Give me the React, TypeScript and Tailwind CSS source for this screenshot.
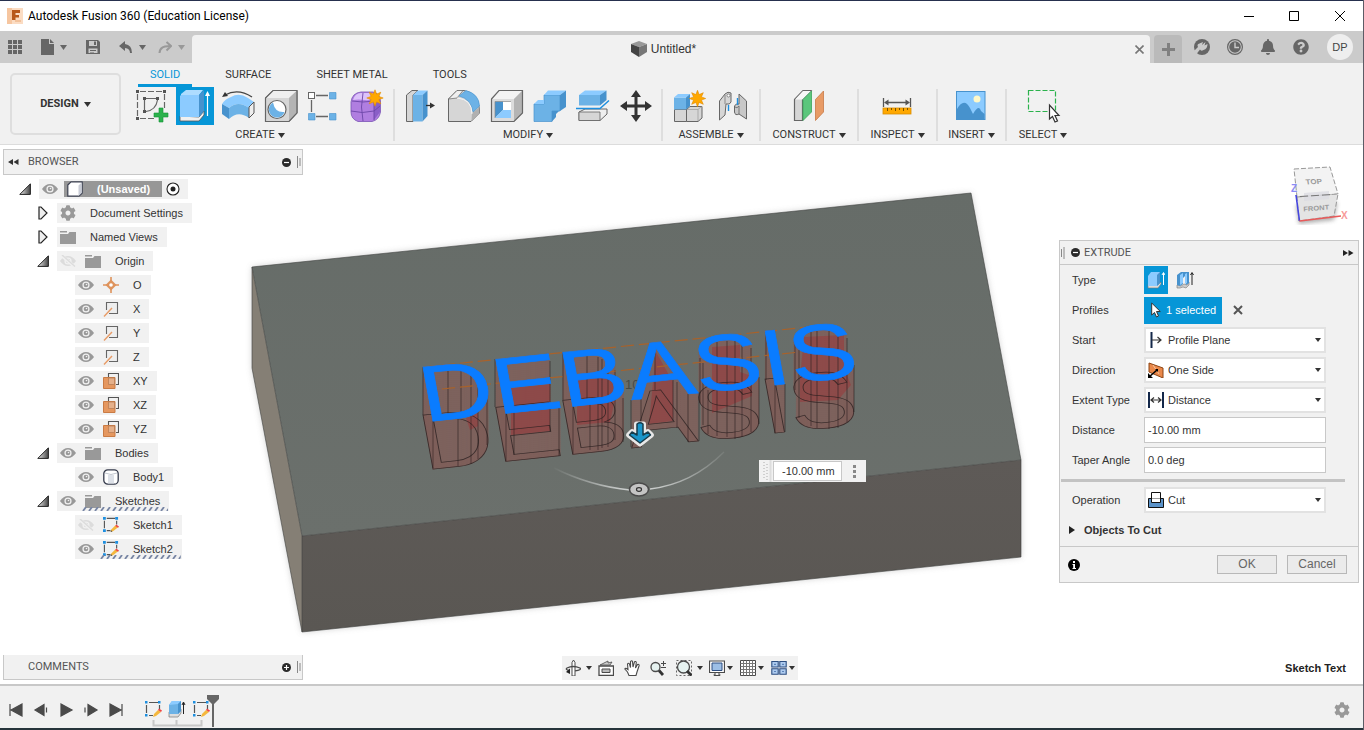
import type { ReactNode } from "react";
import { FaBell, FaCog, FaQuestionCircle } from "react-icons/fa";

const INK = "#4a4a4a";
const GREY = "#d6d6d6";
const LINE = "#666666";
const BLUE = "#6cb2e6";
const BLUE_LIGHT = "#8ccbff";
const BLUE_DARK = "#4792cd";

function Caret({ className = "text-[#333]" }: { className?: string }) {
  return (
    <svg viewBox="0 0 7 5" className={`h-[5px] w-[7px] shrink-0 ${className}`} aria-hidden="true">
      <path d="M0 0H7L3.5 5Z" fill="currentColor" />
    </svg>
  );
}

/* ---------- ribbon icons ---------- */

function Burst({ x, y }: { x: number; y: number }) {
  const points = Array.from({ length: 16 }, (_, i) => {
    const r = i % 2 === 0 ? 8.2 : 4.2;
    const a = (i * Math.PI) / 8;
    return `${(x + r * Math.sin(a)).toFixed(1)},${(y - r * Math.cos(a)).toFixed(1)}`;
  }).join(" ");
  return <polygon points={points} fill="#ffa800" stroke="#e08a00" strokeWidth=".6" />;
}

const sketchIcon = (
  <>
    <g fill="none" stroke={LINE} strokeWidth="1.2">
      <path d="M9 4.5H31M6.5 7V29M9 31.5H23M33.5 7V21" strokeDasharray="6 2" />
      <path d="M13.5 23V13M15 11.5H25M26.5 13Q25 23 15 24.5" />
    </g>
    <g fill="#555">
      <path d="M5 3H8V6H5ZM32 3H35V6H32ZM5 30H8V33H5ZM12 10H15V13H12ZM25 10H28V13H25ZM12 23H15V26H12Z" />
    </g>
    <path d="M28 21H32V26H37V30H32V35H28V30H23V26H28Z" fill="#2bb24c" stroke="#159137" strokeWidth=".6" />
  </>
);

const extrudeIcon = (
  <>
    <path d="M6 29L25 30L30 24V28L25 34L6 34Z" fill="#f0f0f0" stroke="#555" strokeWidth=".8" />
    <path d="M6 9L8 7H25V30H6Z" fill={BLUE_LIGHT} />
    <path d="M7 7L12 3H29L25 8H7Z" fill="#aedcff" />
    <path d="M25 8L30 3V24L25 30Z" fill={BLUE_DARK} />
    <path d="M33.5 29V6" stroke="#fff" strokeWidth="1.2" />
    <path d="M31 9L33.5 4L36 9Z" fill="#fff" />
  </>
);

const revolveIcon = (
  <>
    <path d="M5 17Q8 12 14 10Q22 5 31 11L37 15L32 21Q21 13 12 21Z" fill={BLUE_LIGHT} />
    <path d="M5 17L12 21V32L5 27Z" fill={BLUE_DARK} />
    <path d="M12 21Q21 13 32 21V31Q21 23 12 32Z" fill={BLUE} />
    <path d="M32 20L37 15V26L32 31Z" fill="#eee" stroke="#555" />
    <path d="M8 8Q21 1 35 10" fill="none" stroke="#444" strokeWidth="1.3" />
    <path d="M5 10L8 5L11 9Z" fill="#333" />
  </>
);

const holeIcon = (
  <>
    <path d="M5.500 11L13 3.500H37V26L29 34.500H5.500Z" fill={GREY} stroke={LINE} strokeLinejoin="round" />
    <path d="M6 11L13 4H36.500L29 11Z" fill="#efefef" />
    <path d="M29 11L36.500 4V26L29 34Z" fill="#b4b4b4" />
    <path d="M5.500 11L13 3.500H37V26L29 34.500H5.500Z" fill="none" stroke={LINE} strokeWidth="1.2" />
    <circle cx="17" cy="22.500" r="9" fill="#fff" stroke={LINE} strokeWidth="1.2" />
    <path d="M13 15.500A8 8 0 1 0 24.500 25Q15 26 13 15.500Z" fill={BLUE} />
  </>
);

const patternIcon = (
  <>
    <path d="M13 8.500H25M13 29.500H25M8.500 13V25" stroke={LINE} strokeWidth="1.3" />
    <rect x="5.500" y="5.500" width="6" height="6" fill="#fff" stroke={LINE} />
    <g fill={BLUE} stroke={BLUE_DARK} strokeWidth=".6">
      <path d="M26.500 5.500H33V12H26.500ZM26.500 26.500H33V33H26.500ZM5.500 26.500H12V33H5.500Z" />
    </g>
  </>
);

const formIcon = (
  <>
    <path d="M5 15Q6 6 15 5H27Q34 7 34.500 14V25Q33 33 26 34.500H12Q5 32 5 25Z" fill="#b07ee0" stroke="#7a54b5" strokeWidth=".8" />
    <path d="M7 13Q9 6 15 6H27L29 9Q24 14 19 13Q12 12 7 13Z" fill="#dcc2fa" />
    <path d="M28 14L34 11V25L28 33Z" fill="#8a5fc7" />
    <path d="M5 24Q16 27 28 24L34 19M17 6Q14 20 17 34M28 14V33M6 14Q17 16 28 14" fill="none" stroke="#6c46a8" strokeWidth=".9" />
    <Burst x={29} y={11} />
  </>
);

const pressPullIcon = (
  <>
    <path d="M7.500 8L13 3.500H19L14 8V34.500H7.500Z" fill={GREY} stroke={LINE} />
    <path d="M14 8H23.500V34.500H14Z" fill={BLUE} />
    <path d="M14 8L19 3.500H28.500L23.500 8Z" fill={BLUE_LIGHT} />
    <path d="M23.500 8L28.500 3.500V29L23.500 34.500Z" fill={BLUE_DARK} />
    <path d="M27 18.500H32" stroke="#333" strokeWidth="1.3" />
    <path d="M31 15.500L36 18.500L31 21.500Z" fill="#333" />
  </>
);

const filletIcon = (
  <>
    <path d="M6.500 12L15 3.500H22Q36 6 37.500 22V26L29 34.500H6.500Z" fill={GREY} stroke={LINE} />
    <path d="M6.500 12L15 3.500H21L15 11Z" fill="#efefef" stroke={LINE} strokeWidth=".7" />
    <path d="M30 26L37.500 20V26L29.500 34Z" fill="#b0b0b0" />
    <path d="M17 9L24 3.500Q37 7 37.500 19L31 25Q29 12 17 9Z" fill={BLUE} stroke={BLUE_DARK} strokeWidth=".6" />
    <path d="M15 11Q30 12 30 27" fill="none" stroke="#f6f6f6" strokeWidth="1" />
  </>
);

const shellIcon = (
  <>
    <path d="M6.500 12L14 3.500H37.500V26L29 34.500H6.500Z" fill="#dcdcdc" />
    <path d="M7 12L14 4H37L29 12Z" fill="#f3f3f3" />
    <path d="M29 12L37.500 3.500V26L29 34.500Z" fill="#b4b4b4" />
    <path d="M6.500 12L14 3.500H37.500V26L29 34.500H6.500Z" fill="none" stroke={LINE} strokeWidth="1.2" />
    <path d="M10 14.500H26V31H10Z" fill="#fff" />
    <path d="M10 14.500H18V23L10 31Z" fill={BLUE_DARK} />
    <path d="M10 31L18 23H26V31Z" fill={BLUE_LIGHT} />
    <path d="M10 31V14.500H26" fill="none" stroke="#888" strokeWidth=".7" />
  </>
);

const combineIcon = (
  <>
    <path d="M6 17H16V8H32V24H24V34.500H6Z" fill={BLUE} stroke={BLUE_DARK} strokeWidth=".7" />
    <path d="M6 17L10 13H16V17ZM16 8L20 3.500H38L32 8Z" fill={BLUE_LIGHT} />
    <path d="M32 8L38 3.500V20L32 24ZM24 24H31L28 27V30L24 34.500Z" fill={BLUE_DARK} />
  </>
);

const splitIcon = (
  <>
    <path d="M8 25L14 22H36V27L29 33.500H8Z" fill="#efefef" stroke={LINE} />
    <path d="M8 25H29V33.500H8Z" fill={GREY} stroke={LINE} strokeWidth=".8" />
    <path d="M8 8H29V18.500H8Z" fill={BLUE} />
    <path d="M8 8L14 3.500H35.500L29 8Z" fill={BLUE_LIGHT} />
    <path d="M29 8L35.500 3.500V13L29 18.500Z" fill={BLUE_DARK} />
    <path d="M5 21.500H29L38 13.500" fill="none" stroke="#1d8fe0" strokeWidth="1.500" />
  </>
);

const moveIcon = (
  <g fill="#333">
    <path d="M20.500 9H23.500V17.500H32V20.500H23.500V29H20.500V20.500H12V17.500H20.500Z" />
    <path d="M22 3L27 10H17ZM22 35L27 28H17ZM6 19L13 14V24ZM38 19L31 14V24Z" />
  </g>
);

const componentIcon = (
  <>
    <path d="M6.500 22.500H18.500V34.500H6.500Z" fill={GREY} stroke={LINE} />
    <path d="M18.500 22.500L22 19.500H34V31L30 34.500H18.500Z" fill={GREY} stroke={LINE} />
    <path d="M19 22.500H30V34M30 22.500L33.500 19.500" fill="none" stroke="#999" strokeWidth=".7" />
    <path d="M6 10.500H18V22.500H6Z" fill={BLUE} />
    <path d="M6 10.500L10 7H22L18 10.500Z" fill={BLUE_LIGHT} />
    <path d="M18 10.500L22 7V19L18 22.500Z" fill={BLUE_DARK} />
    <Burst x={29.500} y={11.500} />
  </>
);

const jointIcon = (
  <>
    <path d="M8.500 14L14 7Q17 4 20 6V15Q19 18 15 17L14 28L8.500 33Z" fill={GREY} stroke={LINE} />
    <path d="M14 8V17" stroke="#888" />
    <path d="M35.500 32L28 27Q24 29 23.500 25V19Q25 16 28 17V7L35.500 14Z" fill="#c8c8c8" stroke={LINE} />
    <path d="M17.500 18V24M26.500 11V18" stroke="#1d8fe0" strokeWidth="1.400" />
    <circle cx="17.500" cy="8.500" r="1.500" fill="#fff" stroke={LINE} strokeWidth=".7" />
    <path d="M24 20Q26 22 28 19V27" fill="none" stroke={LINE} strokeWidth=".8" />
  </>
);

const constructIcon = (
  <>
    <path d="M6.500 12.500L15 3.500H23L14.500 12.500V33.500H6.500Z" fill={GREY} stroke={LINE} strokeWidth="1.2" />
    <path d="M7 12.500L15 4H23L14.500 12.500Z" fill="#f7f7f7" />
    <path d="M15 12.500L23.500 4V25L15 33.500Z" fill="#5bc67c" stroke="#3ba45c" strokeWidth=".8" />
    <path d="M27.500 12.500L35.500 4V25L27.500 33.500Z" fill="#e89b66" stroke="#c87a46" strokeWidth=".8" />
  </>
);

const inspectIcon = (
  <>
    <path d="M7.500 11V20M34.500 11V20M10 15.500H32" stroke="#555" strokeWidth="1.300" />
    <path d="M8 15.500L12.500 12.500V18.500ZM34 15.500L29.500 12.500V18.500Z" fill="#555" />
    <rect x="7" y="21" width="28" height="6" fill="#ffa800" stroke="#d98d00" strokeWidth=".8" />
    <path d="M11.500 21V24M15.500 21V23M19.500 21V24M23.500 21V23M27.500 21V24M31.500 21V23" stroke="#7a5200" />
  </>
);

const insertIcon = (
  <>
    <rect x="6.500" y="4.500" width="28.500" height="28" fill={BLUE_LIGHT} stroke={BLUE_DARK} />
    <circle cx="27" cy="12" r="3.500" fill="#fff8c8" />
    <path d="M7 22Q14 10 20 21L23 27Q29 17 31 24L34.500 27V32H7Z" fill={BLUE_DARK} />
  </>
);

const selectIcon = (
  <>
    <rect x="6.500" y="3.500" width="27" height="21" fill="none" stroke="#2bb24c" strokeWidth="1.200" strokeDasharray="5 2" />
    <path d="M27.500 18V32L30.500 29.500L33 35L35.500 34L33 28.500H37Z" fill="#fff" stroke="#333" strokeWidth="1.200" />
  </>
);

type Tool = { name: string; icon: ReactNode; active?: boolean };
type Group = { label: string; width: string; tools: Tool[] };

const groups: Group[] = [
  {
    label: "CREATE",
    width: "",
    tools: [
      { name: "Create Sketch", icon: sketchIcon },
      { name: "Extrude", icon: extrudeIcon, active: true },
      { name: "Revolve", icon: revolveIcon },
      { name: "Hole", icon: holeIcon },
      { name: "Rectangular Pattern", icon: patternIcon },
      { name: "Create Form", icon: formIcon },
    ],
  },
  {
    label: "MODIFY",
    width: "",
    tools: [
      { name: "Press Pull", icon: pressPullIcon },
      { name: "Fillet", icon: filletIcon },
      { name: "Shell", icon: shellIcon },
      { name: "Combine", icon: combineIcon },
      { name: "Split Body", icon: splitIcon },
      { name: "Move", icon: moveIcon },
    ],
  },
  {
    label: "ASSEMBLE",
    width: "w-[88px]",
    tools: [
      { name: "New Component", icon: componentIcon },
      { name: "Joint", icon: jointIcon },
    ],
  },
  { label: "CONSTRUCT", width: "w-[88px]", tools: [{ name: "Offset Plane", icon: constructIcon }] },
  { label: "INSPECT", width: "w-[69px]", tools: [{ name: "Measure", icon: inspectIcon }] },
  { label: "INSERT", width: "w-[59px]", tools: [{ name: "Decal", icon: insertIcon }] },
  { label: "SELECT", width: "w-[64px]", tools: [{ name: "Select", icon: selectIcon }] },
];

function TitleBar() {
  return (
    <header className="flex h-[31px] shrink-0 items-center border-t border-[#26304e] bg-white pl-[7px]">
      <svg viewBox="0 0 16 16" className="size-4" aria-hidden="true">
        <rect width="16" height="16" fill="#fbdcc3" />
        <path d="M0 0H5V16H0Z" fill="#f6c6a0" />
        <path d="M5 2H13V5H8.500V7H12V9.500H8.500V12H5Z" fill="#b8581a" />
        <path d="M8 13H14" stroke="#e9a875" />
      </svg>
      <h1 className="ml-[5px] text-[12px] text-black [font-family:Roboto,sans-serif]">
        Autodesk Fusion 360 (Education License)
      </h1>
      <div className="ml-auto flex text-black">
        <button aria-label="Minimize" className="grid h-[29px] w-[45px] place-items-center">
          <svg viewBox="0 0 10 10" className="size-[10px]"><path d="M0 5.500H10" stroke="currentColor" /></svg>
        </button>
        <button aria-label="Maximize" className="grid h-[29px] w-[46px] place-items-center">
          <svg viewBox="0 0 10 10" className="size-[10px]"><path d="M.5.5H9.500V9.500H.5Z" fill="none" stroke="currentColor" /></svg>
        </button>
        <button aria-label="Close window" className="grid h-[29px] w-[46px] place-items-center">
          <svg viewBox="0 0 10 10" className="size-[10px]"><path d="M0 0L10 10M10 0L0 10" stroke="currentColor" /></svg>
        </button>
      </div>
    </header>
  );
}

function TabBar() {
  return (
    <div className="flex h-8 shrink-0 items-end bg-[#cbcbcb] text-[#666]">
      <div className="flex h-full w-[192px] items-center pl-2">
        <button aria-label="Data panel">
          <svg viewBox="0 0 14 14" className="size-[14px]" fill="currentColor">
            <path d="M0 0H4V4H0ZM5 0H9V4H5ZM10 0H14V4H10ZM0 5H4V9H0ZM5 5H9V9H5ZM10 5H14V9H10ZM0 10H4V14H0ZM5 10H9V14H5ZM10 10H14V14H10Z" />
          </svg>
        </button>
        <button aria-label="File" className="ml-[19px] flex items-center gap-[6px]">
          <svg viewBox="0 0 13 16" className="h-4 w-[13px]" fill="currentColor">
            <path d="M0 0H8V5H13V16H0ZM9 0L13 4H9Z" />
          </svg>
          <Caret className="text-[#666]" />
        </button>
        <button aria-label="Save" className="ml-[19px]">
          <svg viewBox="0 0 14 14" className="size-[14px]">
            <path d="M0 0H12L14 2V14H0Z" fill="currentColor" />
            <path d="M3 1H11V6H3ZM2.500 8.500H11.500V13H2.500Z" fill="#cbcbcb" />
            <path d="M8 1.500H10V5H8ZM4 10H10V11H4ZM4 12H8V12.500H4Z" fill="currentColor" />
          </svg>
        </button>
        <button aria-label="Undo" className="ml-[19px] flex items-center gap-[6px]">
          <svg viewBox="0 0 14 14" className="size-[14px]">
            <path d="M6 1V4Q13 5 13 13H11Q11 8.500 6 8V11L0 6Z" fill="currentColor" />
          </svg>
          <Caret className="text-[#666]" />
        </button>
        <button aria-label="Redo" className="ml-[12px] flex items-center gap-[6px] text-[#999]">
          <svg viewBox="0 0 14 14" className="size-[14px]">
            <path d="M8.500 2L13 6L8.500 10.500M13 6.500Q2 5 1.500 13" fill="none" stroke="currentColor" strokeWidth="2" />
          </svg>
          <Caret className="text-[#999]" />
        </button>
      </div>
      <div className="flex h-7 flex-1 items-center rounded-t-[4px] bg-[#f1f1f1] pr-[5px]">
        <a href="#untitled" className="flex flex-1 items-center justify-center gap-1 pl-[2px] text-[12px] text-[#333]">
          <svg viewBox="0 0 16 16" className="size-4" aria-hidden="true">
            <path d="M0 3L8 0L16 3L8 6Z" fill="#999" />
            <path d="M0 3L8 6V16L0 11Z" fill="#444" />
            <path d="M8 6L16 3V11L8 16Z" fill="#777" />
          </svg>
          Untitled*
        </a>
        <button aria-label="Close tab" className="grid size-3 place-items-center text-[#777]">
          <svg viewBox="0 0 9 9" className="size-[9px]"><path d="M.5.5L8.500 8.500M8.500.5L.5 8.500" stroke="currentColor" strokeWidth="1.600" /></svg>
        </button>
      </div>
      <button aria-label="New design" className="ml-1 grid h-7 w-7 place-items-center rounded-t-[4px] bg-[#bababa] text-[#808080]">
        <svg viewBox="0 0 13 13" className="size-[13px]"><path d="M5 0H8V5H13V8H8V13H5V8H0V5H5Z" fill="currentColor" /></svg>
      </button>
      <div className="flex h-full items-center gap-[17px] pr-[10px] pl-3">
        <button aria-label="Extensions">
          <svg viewBox="0 0 16 16" className="size-4">
            <circle cx="8" cy="8" r="8" fill="currentColor" />
            <path d="M0 12L4 8Q2.500 5 5.500 4.500L9 3L8 6L11.500 3L10.500 6.500L13.500 5Q13.500 10 9.500 11Q7 12.500 6 10.500L2.500 15Z" fill="#cbcbcb" />
          </svg>
        </button>
        <button aria-label="Job status">
          <svg viewBox="0 0 16 16" className="size-4">
            <circle cx="8" cy="8" r="7.400" fill="none" stroke="currentColor" strokeWidth="1.200" />
            <circle cx="8" cy="8" r="5.800" fill="currentColor" />
            <path d="M8 3.500V8.500H12" fill="none" stroke="#cbcbcb" strokeWidth="1.400" />
          </svg>
        </button>
        <button aria-label="Notifications"><FaBell className="size-4" /></button>
        <button aria-label="Help"><FaQuestionCircle className="size-4" /></button>
        <button className="ml-px size-[26px] rounded-full bg-[#eee] text-[11px] text-[#444]">DP</button>
      </div>
    </div>
  );
}

function Ribbon() {
  return (
    <div className="flex shrink-0 gap-[10px] border-b border-[#dcdcdc] bg-[#f1f1f1] pl-[10px] text-[11px] text-[#333] [font-family:Roboto,sans-serif]">
      <button className="mt-[10px] flex h-[62px] w-[111px] shrink-0 items-center justify-center gap-[5px] rounded-[5px] border-2 border-[#dedede] font-bold">
        DESIGN <Caret />
      </button>
      <div>
        <nav className="flex h-6 gap-[21px] pl-[7px]">
          {["SOLID", "SURFACE", "SHEET METAL", "TOOLS"].map((tab, i) => (
            <a
              key={tab}
              href={`#${tab.toLowerCase().replace(" ", "-")}`}
              className={`border-b-[3px] px-3 pt-[3px] leading-[17px] ${i === 0 ? "border-[#0696d7] text-[#0696d7]" : "border-transparent"}`}
            >
              {tab}
            </a>
          ))}
        </nav>
        <div className="flex">
          {groups.map((g, i) => (
            <div key={g.label} className="flex">
              {i > 0 && <div className="mx-1 mt-[2px] mb-[3px] w-[2px] bg-[#dedede]" />}
              <section aria-label={g.label} className={g.width}>
                <div className="flex justify-center">
                  {g.tools.map((t) => (
                    <button
                      key={t.name}
                      aria-label={t.name}
                      className={t.active ? "mr-[3px] ml-[2px] w-[38px] bg-[#0696d7]" : "w-[43px]"}
                    >
                      <svg viewBox={t.active ? "2 0 38 38" : "0 0 43 38"} className="h-[38px] w-full">{t.icon}</svg>
                    </button>
                  ))}
                </div>
                <button className="flex h-[19px] w-full items-center justify-center gap-[3px] pt-px">
                  {g.label} <Caret />
                </button>
              </section>
            </div>
          ))}
        </div>
      </div>
    </div>
  );
}

/* ---------- browser tree ---------- */

function Eye({ off = false }: { off?: boolean }) {
  return (
    <svg viewBox="0 0 16 12" className={`h-3 w-4 shrink-0 ${off ? "text-[#dcdcdc]" : "text-[#999]"}`} aria-hidden="true">
      <path d="M0 6Q3.500 1 8 1T16 6Q12.500 11 8 11T0 6Z" fill="currentColor" />
      <circle cx="8" cy="6" r="3.600" fill="#f1f1f1" />
      <circle cx="8" cy="6" r="2.300" fill="currentColor" />
      <circle cx="8.500" cy="5.500" r=".8" fill="#f1f1f1" />
      {off && <path d="M1 0L15 12" stroke="#f1f1f1" strokeWidth="3" />}
      {off && <path d="M2 0L15 11.500" stroke="currentColor" strokeWidth="1.400" />}
    </svg>
  );
}

const glyphs: Record<string, ReactNode> = {
  gear: <FaCog className="size-4 text-[#999]" />,
  folder: (
    <svg viewBox="0 0 16 14" className="h-[14px] w-4">
      <path d="M0 1H7V2.500H0ZM0 4H8L9.500 2H16V14H0Z" fill="#999" />
    </svg>
  ),
  origin: (
    <svg viewBox="0 0 16 16" className="size-4">
      <path d="M8 2.500L13.500 8L8 13.500L2.500 8Z" fill="#de935c" />
      <path d="M8 0V4M8 12V16M0 8H4M12 8H16" stroke="#de935c" strokeWidth="1.600" />
      <circle cx="8" cy="8" r="1.800" fill="#fff" />
    </svg>
  ),
  axis: (
    <svg viewBox="0 0 16 16" className="size-4">
      <path d="M3.500 9V1.500H14.500V12.500H6" fill="#eee" stroke="#666" strokeWidth="1.100" />
      <path d="M1 15.500L9 7" stroke="#e89b66" strokeWidth="1.400" />
    </svg>
  ),
  plane: (
    <svg viewBox="0 0 16 16" className="size-4">
      <path d="M5.500 4V.5H15.500V11.500H13" fill="none" stroke="#555" strokeWidth="1.100" />
      <path d="M.5 4.500H12V15.500H.5Z" fill="#e5975f" stroke="#c97b44" />
      <path d="M5.500 5H11.500V11.500H5.500Z" fill="#e5b08a" stroke="#b57a50" strokeWidth=".7" />
    </svg>
  ),
  body: (
    <svg viewBox="0 0 16 16" className="size-4">
      <rect x=".8" y=".8" width="14.400" height="14.400" rx="4" fill="#fff" stroke="#33394a" strokeWidth="1.300" />
      <path d="M5 6H11V14.500H5Z" fill="#dde1e8" />
      <path d="M2 4Q8 7 14 4" fill="none" stroke="#c2c7d0" />
    </svg>
  ),
  sketch: (
    <svg viewBox="0 0 17 17" className="size-4">
      <path d="M4 1.500H13M1.500 4V12M4 14.500H8M14.500 4V8" stroke="#555" strokeWidth="1.200" />
      <path d="M0 0H3V3H0ZM13 0H16V3H13ZM0 13H3V16H0Z" fill="#1d8fe0" />
      <path d="M8 16L9 13L13 9L16 11L11 15Z" fill="#f5b83d" />
      <path d="M14 8L17 10L16 11.500L13 9.500Z" fill="#ef4444" />
      <path d="M8 16L9 14L10 15.500Z" fill="#444" />
    </svg>
  ),
  cube: (
    <svg viewBox="0 0 16 16" className="size-4">
      <path d="M.8 4L4 .8H15.200V12L12 15.200H.8Z" fill="#fff" stroke="#3c4152" strokeWidth="1.200" strokeLinejoin="round" />
      <path d="M11.500 4.500L14.700 1.500V12L11.500 15Z" fill="#c9ccd6" />
    </svg>
  ),
};

type Node = {
  label: string;
  level: 1 | 2;
  glyph: string;
  arrow?: "open" | "closed";
  eye?: "on" | "off";
  hatched?: boolean;
};

const nodes: Node[] = [
  { label: "Document Settings", level: 1, glyph: "gear", arrow: "closed" },
  { label: "Named Views", level: 1, glyph: "folder", arrow: "closed" },
  { label: "Origin", level: 1, glyph: "folder", arrow: "open", eye: "off" },
  { label: "O", level: 2, glyph: "origin", eye: "on" },
  { label: "X", level: 2, glyph: "axis", eye: "on" },
  { label: "Y", level: 2, glyph: "axis", eye: "on" },
  { label: "Z", level: 2, glyph: "axis", eye: "on" },
  { label: "XY", level: 2, glyph: "plane", eye: "on" },
  { label: "XZ", level: 2, glyph: "plane", eye: "on" },
  { label: "YZ", level: 2, glyph: "plane", eye: "on" },
  { label: "Bodies", level: 1, glyph: "folder", arrow: "open", eye: "on" },
  { label: "Body1", level: 2, glyph: "body", eye: "on" },
  { label: "Sketches", level: 1, glyph: "folder", arrow: "open", eye: "on", hatched: true },
  { label: "Sketch1", level: 2, glyph: "sketch", eye: "off" },
  { label: "Sketch2", level: 2, glyph: "sketch", eye: "on", hatched: true },
];

function Arrow({ kind }: { kind?: "open" | "closed" }) {
  return (
    <span className="grid w-[27px] shrink-0 place-items-center pr-px">
      {kind === "open" && (
        <svg viewBox="0 0 12 12" className="size-3" aria-hidden="true">
          <defs>
            <linearGradient id="fold" x1="0" x2="1"><stop offset="0" stopColor="#eee" /><stop offset="1" stopColor="#444" /></linearGradient>
          </defs>
          <path d="M.8 11.400H11.400V.8Z" fill="url(#fold)" stroke="#222" strokeWidth="1" />
        </svg>
      )}
      {kind === "closed" && (
        <svg viewBox="0 0 10 14" className="h-[14px] w-[10px]" aria-hidden="true">
          <path d="M1 1H3L9 7L3 13H1Z" fill="#eee" stroke="#222" strokeWidth="1.200" />
        </svg>
      )}
    </span>
  );
}

function PanelHeader({ title, collapsed = false }: { title: string; collapsed?: boolean }) {
  return (
    <div
      className={`flex w-[300px] items-center border-[#c8c8c8] bg-[#f1f1f1] pl-1 text-[11px] text-[#555] [font-family:Roboto,sans-serif] ${collapsed ? "h-[25px] border-x border-b" : "h-[26px] border"}`}
    >
      <span className="w-5">
        {!collapsed && (
          <svg viewBox="0 0 11 6" className="h-[6px] w-[11px]" aria-hidden="true"><path d="M0 3L5 0V6ZM5.500 3L10.500 0V6Z" fill="#333" /></svg>
        )}
      </span>
      <h2>{title}</h2>
      <button aria-label={collapsed ? "Expand" : "Collapse"} className="ml-auto">
        <svg viewBox="0 0 9 9" className="size-[9px]">
          <circle cx="4.500" cy="4.500" r="4.500" fill="#2b2b2b" />
          <path d={collapsed ? "M2 4.500H7M4.500 2V7" : "M2 4.500H7"} stroke="#fff" strokeWidth="1.200" />
        </svg>
      </button>
      <svg viewBox="0 0 4 12" className="mr-px ml-[6px] h-3 w-1" aria-hidden="true"><path d="M.5 0V12M3 2V10" stroke="#888" /></svg>
    </div>
  );
}

function Hatch() {
  return (
    <span className="absolute right-px bottom-0 left-[25px] h-1">
      <svg className="block h-full w-full" aria-hidden="true">
        <defs>
          <pattern id="hatch" width="6" height="4" patternUnits="userSpaceOnUse"><path d="M1 4L4 0" stroke="#7684a3" strokeWidth="1.800" /></pattern>
        </defs>
        <rect width="100%" height="4" fill="url(#hatch)" />
      </svg>
    </span>
  );
}

function Browser() {
  return (
    <div className="pt-1 text-[11px] text-[#333]">
      <div className="pl-[3px]"><PanelHeader title="BROWSER" /></div>
      <ul className="flex flex-col gap-1 pt-1">
        <li className="flex h-5 pl-3">
          <Arrow kind="open" />
          <div className="flex items-center bg-[#f1f1f1] pr-2 pl-[3px]">
            <Eye />
            <span className="ml-[6px] flex h-4 items-center gap-[14px] bg-[#979797] pr-3 pl-[3px] font-bold text-white">
              {glyphs.cube}(Unsaved)
            </span>
            <svg viewBox="0 0 14 14" className="ml-1 size-[14px]" aria-hidden="true">
              <circle cx="7" cy="7" r="6" fill="#fff" stroke="#222" strokeWidth="1.100" />
              <circle cx="7" cy="7" r="2.500" fill="#222" />
            </svg>
          </div>
        </li>
        {nodes.map((n) => (
          <li key={n.label} className={`flex h-5 ${n.level === 1 ? "pl-[30px]" : "pl-12"}`}>
            <Arrow kind={n.arrow} />
            <div className="relative flex items-center bg-[#f1f1f1] pr-[9px] pl-[3px]">
              {n.eye && <span className="mr-[9px]"><Eye off={n.eye === "off"} /></span>}
              <span className="mr-[14px] w-4">{glyphs[n.glyph]}</span>
              {n.label}
              {n.hatched && <Hatch />}
            </div>
          </li>
        ))}
      </ul>
    </div>
  );
}

/* ---------- model view ---------- */

const walls: [number, number, number][] = [
  [423, 367, 415], [433, 421, 468], [448, 371, 416], [458, 419, 466], [461, 370, 414], [471, 372, 464], [478, 377, 459], [487, 395, 445],
  [495, 359, 407], [506, 413, 461], [514, 410, 455], [550, 361, 432], [559, 408, 456],
  [563, 352, 400], [573, 406, 454], [587, 356, 400], [590, 403, 450], [598, 357, 450], [602, 359, 448], [608, 362, 447], [615, 370, 440], [623, 398, 442],
  [631, 400, 447], [641, 398, 446], [655, 350, 390], [673, 380, 421], [677, 382, 428], [688, 394, 442], [699, 392, 441],
  [700, 358, 403], [703, 363, 425], [708, 390, 434], [717, 342, 436], [727, 341, 437], [735, 341, 439], [742, 344, 437], [751, 348, 432], [759, 377, 424],
  [766, 331, 380], [775, 385, 433], [785, 384, 432],
  [795, 340, 390], [799, 350, 418], [811, 331, 426], [817, 331, 428], [829, 331, 429], [838, 332, 428], [847, 338, 422], [854, 365, 412],
];

function Model() {
  return (
    <svg
      viewBox="0 145 1363 539"
      preserveAspectRatio="xMidYMid meet"
      className="absolute inset-0 h-full w-full [font-family:'Liberation_Sans',Arial,sans-serif]"
      role="img"
      aria-label="Block with extruded lettering"
    >
      <defs>
        <linearGradient id="top" x1="0" y1="0" x2="0" y2="1"><stop offset="0" stopColor="#666c68" /><stop offset="1" stopColor="#6b706c" /></linearGradient>
        <linearGradient id="front" x1="0" y1="0" x2="0" y2="1"><stop offset="0" stopColor="#5e5a57" /><stop offset="1" stopColor="#5a5753" /></linearGradient>
        <linearGradient id="sweep" gradientUnits="userSpaceOnUse" x1="552" y1="0" x2="726" y2="0">
          <stop offset="0" stopColor="#d4d7d6" stopOpacity="0" />
          <stop offset=".4" stopColor="#d4d7d6" stopOpacity=".9" />
          <stop offset=".6" stopColor="#d4d7d6" stopOpacity=".9" />
          <stop offset="1" stopColor="#d4d7d6" stopOpacity="0.1" />
        </linearGradient>
        <filter id="soft" x="-5%" y="-5%" width="110%" height="110%"><feGaussianBlur stdDeviation="3" /></filter>
      </defs>
      <path d="M252 267L971 193L1021 460V557L302 632L252 368Z" fill="#8a8a8a" opacity=".4" filter="url(#soft)" />
      <path d="M252 267L302 536V632L252 368Z" fill="#857f75" />
      <path d="M252 267L971 193L1021 460L302 536Z" fill="url(#top)" />
      <path d="M302 536L1021 460V557L302 632Z" fill="url(#front)" />
      <path d="M302 632V536L252 267L971 193L1021 460V557L302 632L252 368V267M302 536L1021 460" fill="none" stroke="#40413f" strokeWidth=".6" />

      <text x="625" y="389" fontSize="13" fill="#464b48">10</text>

      <g fill="#7d625d" stroke="#7d625d" strokeWidth=".6">
        {Array.from({ length: 25 }, (_, i) => (
          <use key={i} href="#lettering" y={48 - i * 2} />
        ))}
      </g>
      <g fill="#a52a2f" opacity=".42">
        <path d="M511 388L550 384V431L511 435Z" />
        <path d="M577 380L612 376L616 395L610 422L577 425Z" />
        <path d="M656 352L673 382V421L649 424L652 392Z" />
        <path d="M712 347L740 345V372L752 376V396L712 413Z" />
        <path d="M804 337L844 335V368L851 385L838 400L800 402V378Z" />
        <path d="M466 418L478 413V426L470 430Z" />
      </g>
      <path d={walls.map(([x, a, b]) => `M${x} ${a}V${b}`).join("")} stroke="#2a2020" strokeWidth=".8" opacity=".75" fill="none" />
      <g fill="#8b3f3f" fillOpacity=".08" stroke="#2a2020" strokeWidth=".9" strokeOpacity=".8">
        <use href="#lettering" y="48" />
      </g>
      <g stroke="#a8622b" strokeWidth="1.200" strokeDasharray="13 5" fill="none">
        <path d="M424 367L828 325V333M442 389L800 352" />
      </g>
      <g fill="#0a7cff" stroke="#0a7cff" strokeWidth=".8">
        <text id="lettering" fontSize="100" transform="matrix(1.006 -.106 .145 .785 424.750 421.900)">DEBASIS</text>
      </g>

      <path d="M554 468Q590 486 630 490M650 489Q692 484 724 452" fill="none" stroke="url(#sweep)" strokeWidth="1.400" />
      <ellipse cx="639" cy="489.500" rx="9.500" ry="6.500" fill="#c4c4c4" stroke="#4a4a4a" strokeWidth="1.500" />
      <ellipse cx="639" cy="489.500" rx="2.500" ry="1.800" fill="none" stroke="#333" strokeWidth="1.200" />
      <path
        d="M636.500 424H643.500V434L648 431.500L651.500 435L640 444L628.500 435L632 431.500L636.500 434Z"
        fill="#1b8fbf"
        stroke="#e8e8e8"
        strokeWidth="5"
        strokeLinejoin="round"
      />
      <path
        d="M637 424Q640 421.500 643 424V435L648 432L650.500 435L640 443L629.500 435L632 432L637 435Z"
        fill="#1b95c9"
        stroke="#183c4b"
        strokeWidth="1.500"
        strokeLinejoin="round"
      />
    </svg>
  );
}

function ViewCube() {
  return (
    <svg viewBox="1288 163 64 62" className="mr-[11px] h-[62px] w-16 [font-family:'Liberation_Sans',Arial,sans-serif]" aria-label="View cube" role="img">
      <defs>
        <filter id="cubeShadow"><feGaussianBlur stdDeviation="2" /></filter>
      </defs>
      <path d="M1296 205L1337 202L1334 220L1299 224Z" fill="#777" opacity=".6" filter="url(#cubeShadow)" />
      <path d="M1294 169L1330 167L1338 194L1297 197Z" fill="#f3f3f3" stroke="#999" strokeDasharray="5 2" />
      <path d="M1297 197L1338 194L1334 216L1299 221Z" fill="#e4e4e4" stroke="#999" strokeDasharray="5 2" />
      <path d="M1304 193L1329 191V199L1304 201Z" fill="#dcdce2" opacity=".8" />
      <path d="M1300 196.500L1332 194.500" stroke="#777" strokeDasharray="8 3" />
      <path d="M1296 195L1299.500 221" stroke="#4545e0" strokeWidth="1.600" />
      <path d="M1299.500 221L1341 216" stroke="#e85a5a" strokeWidth="1.600" />
      <g fontWeight="bold" fill="#9a9a9a" fontSize="8">
        <text transform="matrix(1 -.05 .15 .9 1306 184.500)">TOP</text>
        <text transform="matrix(1 -.08 .05 .9 1303.500 211.500)" fontSize="7.500">FRONT</text>
      </g>
      <text x="1291" y="192" fontSize="10" fontWeight="bold" fill="#8c8cf5">Z</text>
      <text x="1341" y="219" fontSize="10" fontWeight="bold" fill="#f79a9a">X</text>
    </svg>
  );
}

/* ---------- extrude dialog ---------- */

const optionIcons: Record<string, ReactNode> = {
  start: <><path d="M3.500 0V16" stroke="#14284a" strokeWidth="2" /><path d="M4 8H13M9.500 5L13 8L9.500 11" fill="none" stroke="#333" strokeWidth="1.200" /></>,
  direction: <><path d="M1 1L15 6V16L1 10Z" fill="#e9884a" stroke="#8c4414" /><path d="M5 3L11 12" stroke="#f7c29c" /><path d="M1 15L9 8" stroke="#000" strokeWidth="1.600" /><path d="M0 16V11L5 16ZM7 7H10V10Z" fill="#000" /></>,
  extent: <><path d="M1 0V16M15 0V16" stroke="#14284a" strokeWidth="2" /><path d="M3 8H13M6 5.500L3 8L6 10.500M10 5.500L13 8L10 10.500" fill="none" stroke="#333" strokeWidth="1.200" /></>,
  cut: <><path d="M.5 6.500H15.500V15.500H.5Z" fill="#5b93c9" stroke="#111" /><path d="M3.500.5H12.500V10.500H3.500Z" fill="#fff" stroke="#111" /><path d="M4 6.500H12" stroke="#999" /></>,
};

function Row({ label, htmlFor, children }: { label: string; htmlFor?: string; children: ReactNode }) {
  return (
    <div className="flex h-[30px] items-center">
      <label htmlFor={htmlFor} className="w-[72px] shrink-0">{label}</label>
      {children}
    </div>
  );
}

function Choice({ id, label, value, icon }: { id: string; label: string; value: string; icon: string }) {
  return (
    <Row label={label} htmlFor={id}>
      <div className="relative w-[182px]">
        <select id={id} className="block h-[26px] w-full appearance-none border-2 border-[#e2e2e2] bg-white pl-[22px] text-[11px]">
          <option>{value}</option>
        </select>
        <svg viewBox="0 0 16 16" className="pointer-events-none absolute top-[5px] left-1 size-4" aria-hidden="true">{optionIcons[icon]}</svg>
        <svg viewBox="0 0 6 4" className="pointer-events-none absolute top-[11px] right-[5px] h-1 w-[6px]" aria-hidden="true"><path d="M0 0H6L3 4Z" fill="#333" /></svg>
      </div>
    </Row>
  );
}

function ExtrudeDialog() {
  return (
    <form className="mr-1 w-[300px] border border-[#c8c8c8] bg-[#f1f1f1] text-[11px] text-[#333]" onSubmit={(e) => e.preventDefault()}>
      <div className="flex h-6 items-center border-b border-[#c8c8c8] pr-1 pl-px text-[#555] [font-family:Roboto,sans-serif]">
        <svg viewBox="0 0 4 12" className="h-3 w-1" aria-hidden="true"><path d="M.5 2V10M3 0V12" stroke="#888" /></svg>
        <svg viewBox="0 0 9 9" className="mr-1 ml-[6px] size-[9px]" aria-hidden="true">
          <circle cx="4.500" cy="4.500" r="4.500" fill="#2b2b2b" /><path d="M2 4.500H7" stroke="#fff" strokeWidth="1.200" />
        </svg>
        <h2>EXTRUDE</h2>
        <svg viewBox="0 0 11 6" className="ml-auto h-[6px] w-[11px]" aria-hidden="true"><path d="M0 0L5 3L0 6ZM5.500 0L10.500 3L5.500 6Z" fill="#222" /></svg>
      </div>
      <div className="pl-3">
        <Row label="Type">
          <button type="button" aria-label="Extrude" className="grid h-7 w-6 place-items-center bg-[#0696d7]">
            <svg viewBox="0 0 18 18" className="size-[18px]">
              <path d="M1 13L11 14L14 11V13L11 17H1Z" fill="#ddd" stroke="#777" strokeWidth=".6" />
              <path d="M1 5L4 1H13V12L10 15H1Z" fill={BLUE_LIGHT} />
              <path d="M10 4L13 1V12L10 15Z" fill={BLUE_DARK} />
              <path d="M16.500 14V2M15 4L16.500 1.500L18 4" stroke="#fff" fill="none" />
            </svg>
          </button>
          <button type="button" aria-label="Thin extrude" className="grid h-7 w-[34px] place-items-center">
            <svg viewBox="0 0 18 18" className="size-[18px]">
              <path d="M1 14L5 15L8 13L11 14L13 11V14L10 17L7 16L4 17L1 17Z" fill="#ccc" stroke="#777" strokeWidth=".6" />
              <path d="M1 4L5 1H13V12L10 14V4L7 7V13L4 15L1 14Z" fill={BLUE_DARK} />
              <path d="M4 4L7 2V12L4 14ZM9 3L11 2V12L9 13Z" fill={BLUE_LIGHT} />
              <path d="M16 14V2M14.500 4L16 1.500L17.500 4" stroke="#222" fill="none" />
            </svg>
          </button>
        </Row>
        <Row label="Profiles">
          <button type="button" className="flex h-[27px] w-[78px] items-center gap-[5px] bg-[#0696d7] pl-[7px] text-white">
            <svg viewBox="0 0 10 16" className="h-4 w-[10px]" aria-hidden="true">
              <path d="M.7 1V13L3.500 10.500L5.500 15L7.500 14L5.500 9.500H9.300Z" fill="#fff" stroke="#333" />
            </svg>
            1 selected
          </button>
          <button type="button" aria-label="Clear profiles" className="ml-[11px]">
            <svg viewBox="0 0 10 10" className="size-[10px]"><path d="M1 1L9 9M9 1L1 9" stroke="#555" strokeWidth="2" /></svg>
          </button>
        </Row>
        <Choice id="start" label="Start" value="Profile Plane" icon="start" />
        <Choice id="direction" label="Direction" value="One Side" icon="direction" />
        <Choice id="extent" label="Extent Type" value="Distance" icon="extent" />
        <Row label="Distance" htmlFor="distance">
          <input id="distance" defaultValue="-10.00 mm" className="h-[26px] w-[182px] border border-[#c8c8c8] bg-white pl-[3px]" />
        </Row>
        <Row label="Taper Angle" htmlFor="taper">
          <input id="taper" defaultValue="0.0 deg" className="h-[26px] w-[182px] border border-[#c8c8c8] bg-white pl-[3px]" />
        </Row>
      </div>
      <div className="mt-1 mr-[13px] mb-[3px] ml-px h-[3px] bg-[#c3c3c3]" />
      <div className="pl-3"><Choice id="operation" label="Operation" value="Cut" icon="cut" /></div>
      <button type="button" className="flex h-[30px] items-center gap-[9px] pl-[9px] font-bold">
        <svg viewBox="0 0 6 8" className="h-2 w-[6px]" aria-hidden="true"><path d="M0 0L6 4L0 8Z" fill="#222" /></svg>
        Objects To Cut
      </button>
      <div className="mt-px flex h-9 items-center border-t border-[#c8c8c8] pr-[11px] pl-2 text-[12px]">
        <svg viewBox="0 0 12 12" className="size-3" aria-hidden="true">
          <circle cx="6" cy="6" r="6" fill="#000" /><path d="M5 2H7V4H5ZM4.500 5H7V9H8V10H4.500V9H5.200V6H4.500Z" fill="#fff" />
        </svg>
        <button type="submit" className="mr-[10px] ml-auto h-[19px] w-[60px] border border-[#b8b8b8] bg-[#ebebeb] leading-[17px] text-[#666]">OK</button>
        <button type="button" className="h-[19px] w-[60px] border border-[#b8b8b8] bg-[#ebebeb] leading-[17px] text-[#666]">Cancel</button>
      </div>
    </form>
  );
}

/* ---------- navigation bar and timeline ---------- */

const plainTool = "mr-[10px]";
const wideMenu = "mr-[6px] gap-[5px]";
const tightMenu = "mr-[7px] gap-[2px]";

const navTools: { name: string; spacing: string; icon: ReactNode }[] = [
  { name: "Orbit", spacing: wideMenu, icon: <><path d="M7 2.500L8.500 0L10 2.500V16H7Z" fill="#fff" stroke={INK} /><path d="M4 10.500Q0 9.500 2 8Q8 5 15 8Q17 10 10 10.800" fill="none" stroke={INK} strokeWidth="1.300" /><path d="M1 12L5 8.500V14Z" fill="#222" /></> },
  { name: "Look At", spacing: plainTool, icon: <><path d="M1 6H15.500V15.500H1Z" fill="#fff" stroke={INK} strokeWidth="1.300" /><path d="M4 9H12V12.500H4Z" fill="#bbb" stroke={INK} /><path d="M2 5L10 1V3L14 2L12 5Z" fill="#ccc" stroke={INK} strokeWidth=".8" /></> },
  { name: "Pan", spacing: plainTool, icon: <path d="M5 15.500L3.500 12L.8 9Q1.500 7.500 4 9.500L3.500 4Q4.500 2.500 5.500 4L6.500 7.500L6.500 1.500Q7.800 0 8.500 1.500L9 7L10.500 1.800Q12 1 12.300 2.500L11.500 8L13.500 4.500Q15.500 4 15 6L13 12L12 15.500Z" fill="#fff" stroke={INK} strokeWidth="1.100" /> },
  { name: "Zoom", spacing: plainTool, icon: <><circle cx="5.500" cy="7" r="4.500" fill="#e6f2f0" stroke={INK} strokeWidth="1.300" /><path d="M9 10.500L13 15" stroke="#333" strokeWidth="2.800" /><path d="M11 3.500H16M13.500 1V6M11 7.500H16" stroke={INK} /></> },
  { name: "Fit", spacing: wideMenu, icon: <><path d="M.5.5H15.500V15.500H.5Z" fill="none" stroke="#666" strokeDasharray="2 2" /><circle cx="7.500" cy="7" r="6" fill="#e6f2f0" stroke={INK} strokeWidth="1.300" /><path d="M11 11L15.500 15.500" stroke="#333" strokeWidth="2.800" /></> },
  { name: "Display Settings", spacing: tightMenu, icon: <><path d="M.5 1H15.500V12.500H.5Z" fill="#fff" stroke={INK} strokeWidth="1.200" /><path d="M3 3H13V10.500H3Z" fill="#9dbfe6" stroke="#2c4d80" /><path d="M6 13V15H4.500M10 13V15H11.500M5 15.500H11" stroke={INK} fill="none" /></> },
  { name: "Grid and Snaps", spacing: tightMenu, icon: <><path d="M.5.5H15.500V15.500H.5Z" fill="#fff" stroke={INK} /><path d="M.5 3.500H15.500M.5 6.500H15.500M.5 9.500H15.500M.5 12.500H15.500M3.500.5V15.500M6.500.5V15.500M9.500.5V15.500M12.500.5V15.500" stroke="#777" /></> },
  { name: "Viewports", spacing: "gap-[2px]", icon: <><path d="M.8 1.500H7.200V7H.8ZM8.800 1.500H15.200V7H8.800ZM.8 8.800H7.200V14.300H.8ZM8.800 8.800H15.200V14.300H8.800Z" fill="#aecbef" stroke="#2c4d80" strokeWidth="1.100" /><path d="M3 4.300H5M11 4.300H13M3 11.500H5M11 11.500H13" stroke="#5c83b8" strokeWidth="1.200" /></> },
];

function Footer() {
  return (
    <footer className="flex h-[46px] shrink-0 items-center border-t-2 border-b-2 border-t-[#c8c8c8] border-b-[#26343b] bg-[#f1f1f1] px-[9px]">
      <div className="mt-[6px] flex items-center gap-[11px] text-[#4a4a4a]">
        {[
          ["Go to start", "M1 1V13M2 7L13 1V13Z"],
          ["Step back", "M1 7L10 1.500V12.500ZM12.500 4.500V9.500"],
          ["Play", "M2 1L13 7L2 13Z"],
          ["Step forward", "M4 1.500L13 7L4 12.500ZM1 4.500V9.500"],
          ["Go to end", "M1 1L12 7L1 13ZM13 1V13"],
        ].map(([name, d]) => (
          <button key={name} aria-label={name}>
            <svg viewBox="0 0 14 14" className="size-[14px] overflow-visible"><path d={d} fill="currentColor" stroke="currentColor" strokeWidth="1.200" /></svg>
          </button>
        ))}
      </div>
      <svg viewBox="143 688 80 40" className="ml-5 h-10 w-20 self-end" aria-hidden="true">
        <path d="M153.500 720V725.500H201.500V720M176.500 720V725" fill="none" stroke="#c8c8c8" strokeWidth="2" />
        {[145, 193].map((x) => (
          <g key={x} transform={`translate(${x} 701)`}>
            <path d="M4 1.500H13M1.500 4V12M4 14.500H8M14.500 4V8" stroke="#555" strokeWidth="1.200" />
            <path d="M0 0H2.500V2.500H0ZM13 0H15.500V2.500H13ZM0 13H2.500V15.500H0Z" fill="#1d8fe0" />
            <path d="M8 16L9 13L13 9L16 11L11 15Z" fill="#f5b83d" />
            <path d="M14 7.500L17 9.500L16 11L13 9Z" fill="#ef4444" />
          </g>
        ))}
        <path d="M169 712H178L181 709V713L178 717H169Z" fill="#ddd" stroke="#777" strokeWidth=".7" />
        <path d="M169 705L172 701H181V711L178 714H169Z" fill={BLUE} />
        <path d="M169 705L172 701H181L178 704Z" fill={BLUE_LIGHT} />
        <path d="M178 704L181 701V711L178 714Z" fill={BLUE_DARK} />
        <path d="M183.500 714V703M182 705L183.500 702L185 705" fill="none" stroke="#222" />
        <path d="M207 695H219V699L214 704V727H212V704L207 699Z" fill="#666" />
      </svg>
      <button aria-label="Timeline settings" className="mt-[6px] mr-[4px] ml-auto text-[#999]"><FaCog className="size-4" /></button>
    </footer>
  );
}

export default function App() {
  return (
    <div className="flex min-h-screen flex-col border-r border-[#5c5c66] bg-white leading-4 [font-family:'Liberation_Sans',Arial,sans-serif]">
      <TitleBar />
      <TabBar />
      <Ribbon />
      <main className="relative flex flex-1 flex-col justify-between">
        <Model />
        <div className="relative flex items-start justify-between">
          <Browser />
          <div className="flex flex-col items-end gap-[15px] pt-[18px]">
            <ViewCube />
            <ExtrudeDialog />
          </div>
        </div>
        <div className="absolute top-[315px] left-[759px] flex h-[22px] items-center bg-[#f1f1f1]">
          <svg viewBox="0 0 14 22" className="h-[22px] w-[14px]" aria-hidden="true">
            <path d="M5 2V20M8 4V20" stroke="#c4c4c4" strokeWidth="1.500" strokeDasharray="1 2" />
            <path d="M11.500 0V22" stroke="#ddd" strokeWidth="2" />
          </svg>
          <input aria-label="Extrude distance" defaultValue="-10.00 mm" className="h-5 w-[69px] border border-[#c8c8c8] bg-white pl-2 text-[11px] text-[#333]" />
          <button aria-label="More options" className="grid h-full w-6 place-items-center">
            <svg viewBox="0 0 3 13" className="h-[13px] w-[3px]"><path d="M0 0H3V3H0ZM0 5H3V8H0ZM0 10H3V13H0Z" fill="#888" /></svg>
          </button>
        </div>
        <div className="relative flex items-end pb-1 pl-[3px]">
          <PanelHeader title="COMMENTS" collapsed />
          <div className="ml-[259px] flex h-6 items-center bg-[#f1f1f1] px-[3px]">
            {navTools.map((t) => (
              <button key={t.name} aria-label={t.name} className={`flex items-center ${t.spacing}`}>
                <svg viewBox="0 0 16 16" className="size-4">{t.icon}</svg>
                {t.spacing !== plainTool && (
                  <svg viewBox="0 0 6 4" className="h-1 w-[6px]"><path d="M0 0H6L3 4Z" fill="#333" /></svg>
                )}
              </button>
            ))}
          </div>
          <p className="mr-[17px] ml-auto text-[11px] leading-6 font-bold text-[#222]">Sketch Text</p>
        </div>
      </main>
      <Footer />
    </div>
  );
}
